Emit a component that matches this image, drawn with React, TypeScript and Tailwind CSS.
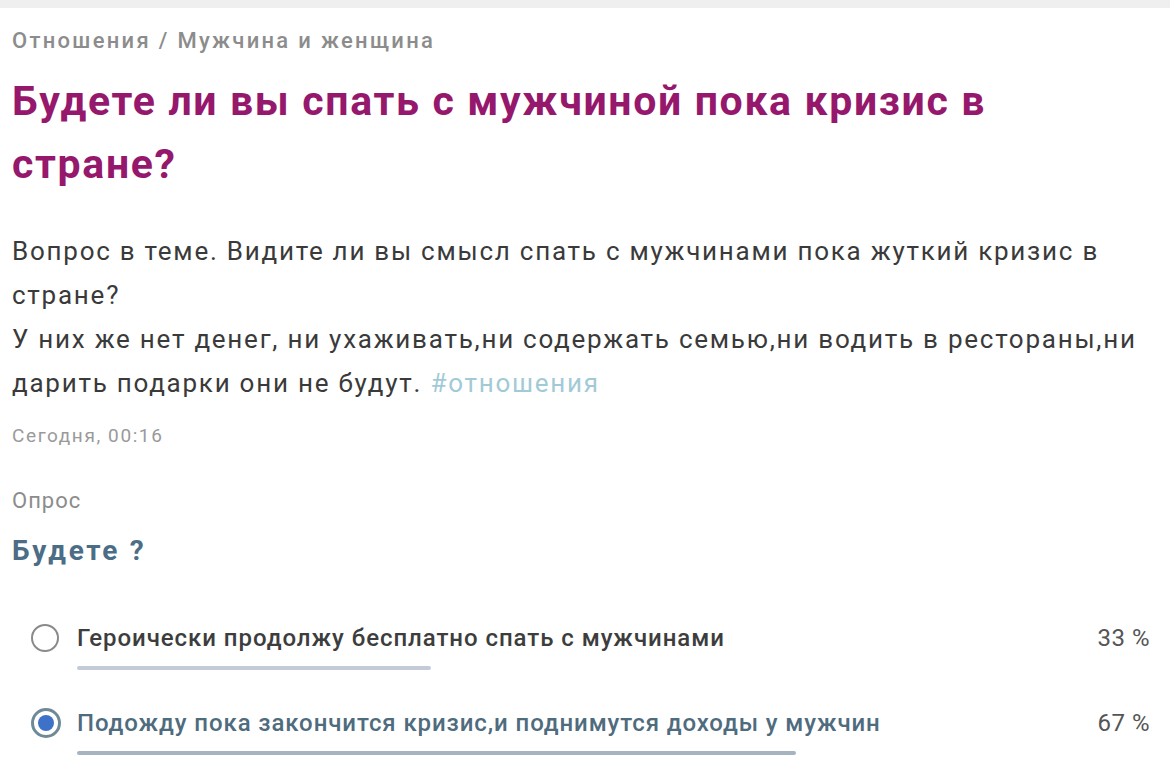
import React from 'react';

interface PollOptionProps {
  text: string;
  percent: number;
  selected?: boolean;
}

const PollOption: React.FC<PollOptionProps> = ({ text, percent, selected }) => {
  return (
    <div className="flex flex-col">
      <div className="flex items-center h-[34px]">
        {/* radio */}
        <div className="w-[77px] pl-[31px] flex items-center">
          {selected ? (
            <div className="w-[30px] h-[30px] rounded-full border-[3px] border-[#6f8a96] bg-white flex items-center justify-center shrink-0">
              <div className="w-[16px] h-[16px] rounded-full bg-[#3e72c8]" />
            </div>
          ) : (
            <div className="w-[28px] h-[28px] rounded-full border-[2.5px] border-[#8a8a8a] shrink-0" />
          )}
        </div>
        <div
          className={
            selected
              ? 'flex-1 text-[24px] tracking-[0.9px] font-medium text-[#4f6b7e]'
              : 'flex-1 text-[24px] tracking-[0.95px] font-medium text-[#3d3d3d]'
          }
        >
          {text}
        </div>
        <div className="w-[90px] pr-[20px] text-right text-[24px] tracking-[0.5px] text-[#555]">{percent} %</div>
      </div>
      <div className="pl-[77px] pr-[20px] mt-[11px]">
        <div
          className={selected ? 'h-[4px] rounded-full bg-[#a8b3c1]' : 'h-[4px] rounded-full bg-[#c3cad8]'}
          style={{ width: `${percent}%` }}
        />
      </div>
    </div>
  );
};

export default function App() {
  return (
    <div
      className="w-[1170px] h-[782px] bg-white overflow-hidden flex flex-col"
      style={{ fontFamily: 'Roboto, "Noto Sans", sans-serif' }}
    >
      <div className="h-[8px] bg-[#efefef]" />

      <div className="pl-[12px] pr-[20px] flex flex-col">
        {/* breadcrumb */}
        <div className="mt-[19px] text-[22px] leading-[28px] tracking-[2.3px] font-medium text-[#8c8c8c]">
          Отношения / Мужчина и женщина
        </div>

        {/* title */}
        <h1 className="mt-[15px] text-[41px] leading-[63px] tracking-[1.65px] font-bold text-[#95186d]">
          Будете ли вы спать с мужчиной пока кризис в<br />
          стране?
        </h1>

        {/* body */}
        <div className="mt-[33px] text-[26px] leading-[44px] text-[#3a3a3a] tracking-[1.75px]">
          Вопрос в теме. Видите ли вы смысл спать с мужчинами пока жуткий кризис в<br />
          стране?<br />
          У них же нет денег, ни ухаживать,ни содержать семью,ни водить в рестораны,ни<br />
          дарить подарки они не будут. <span className="text-[#a2cad6]">#отношения</span>
        </div>

        <div className="mt-[20px] text-[19px] leading-[22px] tracking-[1.6px] text-[#9a9a9a]">Сегодня, 00:16</div>

        <div className="mt-[40px] text-[22px] leading-[28px] tracking-[1px] text-[#8c8c8c]">Опрос</div>

        <div className="mt-[18px] text-[28px] leading-[36px] tracking-[2.7px] font-bold text-[#4b6d85]">Будете ?</div>
      </div>

      <div className="mt-[52px] flex flex-col gap-[36px]">
        <PollOption text="Героически продолжу бесплатно спать с мужчинами" percent={33} />
        <PollOption text="Подожду пока закончится кризис,и поднимутся доходы у мужчин" percent={67} selected />
      </div>
    </div>
  );
}
